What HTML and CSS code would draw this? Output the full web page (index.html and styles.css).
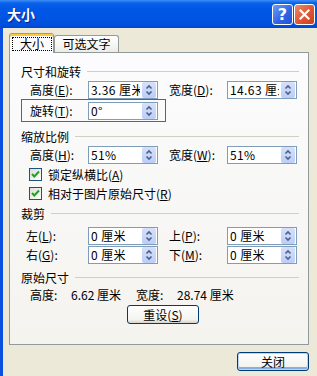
FILE: index.html
```html
<!DOCTYPE html>
<html lang="zh-CN">
<head>
    <meta charset="UTF-8">
    <meta name="viewport" content="width=device-width, initial-scale=1.0">
    <title>大小</title>
    <link rel="stylesheet" href="styles.css">
</head>
<body>
    <div class="window">
        <div class="titlebar">
            <span class="title">大小</span>
            <div class="caption-buttons">
                <span class="cap-btn help">?</span>
                <span class="cap-btn close">
                    <svg width="13" height="13" viewBox="0 0 13 13"><path d="M2.5 2.5 L10.5 10.5 M10.5 2.5 L2.5 10.5" stroke="#fff" stroke-width="2.2" stroke-linecap="square"/></svg>
                </span>
            </div>
        </div>

        <div class="client">
            <div class="tabs">
                <div class="tab active"><span class="focus">大小</span></div>
                <div class="tab">可选文字</div>
            </div>

            <div class="panel">
                <!-- Size and rotate -->
                <div class="group-title"><span>尺寸和旋转</span></div>
                <div class="row">
                    <span class="lbl">高度(<u>E</u>):</span>
                    <div class="spin"><span class="val">3.36 厘米</span><span class="spin-btn"></span></div>
                    <span class="lbl lbl-right">宽度(<u>D</u>):</span>
                    <div class="spin"><span class="val">14.63 厘米</span><span class="spin-btn"></span></div>
                </div>
                <div class="highlight">
                    <div class="row">
                        <span class="lbl">旋转(<u>T</u>):</span>
                        <div class="spin"><span class="val">0°</span><span class="spin-btn"></span></div>
                    </div>
                </div>

                <!-- Scale -->
                <div class="group-title group-scale"><span>缩放比例</span></div>
                <div class="row">
                    <span class="lbl">高度(<u>H</u>):</span>
                    <div class="spin"><span class="val">51%</span><span class="spin-btn"></span></div>
                    <span class="lbl lbl-right">宽度(<u>W</u>):</span>
                    <div class="spin"><span class="val">51%</span><span class="spin-btn"></span></div>
                </div>
                <div class="check-row">
                    <span class="checkbox"><svg width="11" height="11" viewBox="0 0 11 11"><polyline points="2,5 4.3,7.5 9,2.5" fill="none" stroke="#21a121" stroke-width="2"/></svg></span>
                    <span>锁定纵横比(<u>A</u>)</span>
                </div>
                <div class="check-row">
                    <span class="checkbox"><svg width="11" height="11" viewBox="0 0 11 11"><polyline points="2,5 4.3,7.5 9,2.5" fill="none" stroke="#21a121" stroke-width="2"/></svg></span>
                    <span>相对于图片原始尺寸(<u>R</u>)</span>
                </div>

                <!-- Crop -->
                <div class="group-title group-crop"><span>裁剪</span></div>
                <div class="row row-crop">
                    <span class="lbl lbl-short">左(<u>L</u>):</span>
                    <div class="spin"><span class="val">0 厘米</span><span class="spin-btn"></span></div>
                    <span class="lbl lbl-right">上(<u>P</u>):</span>
                    <div class="spin"><span class="val">0 厘米</span><span class="spin-btn"></span></div>
                </div>
                <div class="row row-crop">
                    <span class="lbl lbl-short">右(<u>G</u>):</span>
                    <div class="spin"><span class="val">0 厘米</span><span class="spin-btn"></span></div>
                    <span class="lbl lbl-right">下(<u>M</u>):</span>
                    <div class="spin"><span class="val">0 厘米</span><span class="spin-btn"></span></div>
                </div>

                <!-- Original size -->
                <div class="group-title group-orig"><span>原始尺寸</span></div>
                <div class="info">
                    <span class="info-key">高度:</span>
                    <span class="info-val">6.62 厘米</span>
                    <span class="info-key">宽度:</span>
                    <span class="info-val">28.74 厘米</span>
                </div>
                <button class="btn btn-reset">重设(<u>S</u>)</button>
            </div>

            <div class="footer">
                <button class="btn btn-default">关闭</button>
            </div>
        </div>
    </div>
</body>
</html>
```

FILE: styles.css
```css
/* Global */
body {
    margin: 0;
    background: #ece9d8;
    font-family: "Noto Sans CJK SC", "Liberation Sans", sans-serif;
    font-size: 12px;
    color: #000;
}

u {
    text-decoration: underline;
    text-underline-offset: 1px;
}

.window {
    width: 317px;
    height: 376px;
    overflow: hidden;
    background: #ece9d8;
}

/* Title bar */
.titlebar {
    height: 28px;
    display: flex;
    align-items: center;
    justify-content: space-between;
    padding: 0 2px 0 7px;
    background: linear-gradient(to bottom, #3d8ef7 0, #0a62ea 3px, #0058e6 8px, #0055e3 18px, #0050dc 24px, #0047d2 28px);
}

.title {
    color: #fff;
    font-weight: bold;
    font-size: 14px;
    text-shadow: 1px 1px 0 #0a1e8a;
}

.caption-buttons {
    display: flex;
    gap: 1px;
}

.cap-btn {
    width: 19px;
    height: 19px;
    border: 1px solid #fff;
    border-radius: 3px;
    display: flex;
    align-items: center;
    justify-content: center;
    color: #fff;
    font-family: "DejaVu Sans", sans-serif;
    font-weight: bold;
    font-size: 16px;
}

.help {
    background: linear-gradient(135deg, #6d9cf8 0%, #2f62e0 60%, #2251d4 100%);
}

.close {
    background: linear-gradient(135deg, #ec8c6c 0%, #dd5532 55%, #c9401c 100%);
}

/* Client area */
.client {
    border-left: 3px solid #0b4fe0;
    height: 348px;
    padding: 5px 0 0 6px;
}

/* Tabs */
.tabs {
    display: flex;
    align-items: flex-end;
    height: 20px;
    margin-bottom: -1px;
}

.tab {
    box-sizing: border-box;
    height: 17px;
    width: 65px;
    margin-bottom: 1px;
    border: 1px solid #919b9c;
    border-bottom: none;
    border-radius: 3px 3px 0 0;
    background: linear-gradient(to bottom, #ffffff, #f3f3ef 70%, #ecebe5);
    text-align: center;
    line-height: 16px;
}

.tab.active {
    position: relative;
    z-index: 1;
    width: 45px;
    height: 20px;
    margin-bottom: 0;
    padding: 3px 1px 0 2px;
    border-top: 1px solid #e68b2c;
    background: #fcfcfe;
    box-shadow: inset 0 2px 0 #ffc73c;
}

.focus {
    display: block;
    box-sizing: border-box;
    width: 40px;
    height: 14px;
    border: 1px dotted #000;
    line-height: 12px;
}

/* Tab panel */
.panel {
    box-sizing: border-box;
    width: 300px;
    height: 293px;
    border: 1px solid #919b9c;
    background: linear-gradient(to bottom, #fcfcfe, #f4f3ee);
    padding: 10px 9px 0 11px;
}

.group-title {
    display: flex;
    align-items: center;
    height: 17px;
    line-height: 17px;
}

.group-title::after {
    content: "";
    flex: 1;
    height: 1px;
    margin-left: 6px;
    background: #d0d0bf;
}

.group-scale {
    margin-top: 6px;
}

.group-crop {
    margin-top: 2px;
}

.group-orig {
    margin-top: 5px;
}

/* Rows with spin edits */
.row {
    display: flex;
    align-items: center;
    height: 20px;
}

/* red annotation frame around the rotate row */
.highlight {
    box-sizing: border-box;
    width: 145px;
    height: 23px;
    margin-top: -1px;
    padding: 1px 0 0 8px;
    border: 1px solid #ff2020;
    background: transparent;
}

.row-crop {
    align-items: flex-start;
    height: 19px;
    padding-top: 1px;
    box-sizing: border-box;
}

.group-crop + .row-crop {
    margin-top: 4px;
}

.lbl {
    width: 58px;
    padding-left: 9px;
    line-height: 18px;
    white-space: nowrap;
}

.highlight .lbl {
    padding-left: 0;
}

.lbl-short {
    width: 62px;
    padding-left: 5px;
}

.lbl-right {
    width: 58px;
    padding-left: 11px;
}

.spin {
    box-sizing: border-box;
    width: 70px;
    height: 18px;
    display: flex;
    align-items: stretch;
    border: 1px solid #7f9db9;
    background: #fff;
}

.val {
    flex: 1;
    overflow: hidden;
    white-space: nowrap;
    padding-left: 2px;
    margin-right: 2px;
    line-height: 16px;
    letter-spacing: 0.4px;
}

.spin-btn {
    width: 14px;
    margin: 0 1px 0 0;
    border-radius: 2px;
    background:
        url("data:image/svg+xml,%3Csvg xmlns='http://www.w3.org/2000/svg' width='14' height='16'%3E%3Cpath d='M4.5 6.5 L7 4 L9.5 6.5 M4.5 9.5 L7 12 L9.5 9.5' fill='none' stroke='%234d6185' stroke-width='1.6'/%3E%3C/svg%3E") center no-repeat,
        linear-gradient(to bottom, #d5e0fb, #bccdf7);
}

/* Checkboxes */
.check-row {
    display: flex;
    align-items: center;
    height: 19px;
    padding-left: 8px;
}

.checkbox {
    box-sizing: border-box;
    width: 13px;
    height: 13px;
    border: 1px solid #1c5180;
    background: linear-gradient(135deg, #dcdcd7, #ffffff);
    display: flex;
    align-items: center;
    justify-content: center;
    margin-right: 6px;
}

/* Original size */
.info {
    display: flex;
    height: 16px;
    line-height: 16px;
    margin-top: 1px;
    padding-left: 9px;
    white-space: nowrap;
}

.info-key {
    width: 41px;
}

.info-val {
    width: 65px;
}

/* Buttons */
.btn {
    box-sizing: border-box;
    width: 72px;
    height: 19px;
    padding: 0;
    border: 1px solid #003c74;
    border-radius: 3px;
    background: linear-gradient(to bottom, #ffffff, #f3f3ef 80%, #d8d2c6);
    font-family: inherit;
    font-size: 12px;
    line-height: 16px;
    color: #000;
}

.btn-reset {
    display: block;
    margin: 2px 0 0 106px;
}

.footer {
    margin-top: 7px;
    padding-left: 228px;
}

.btn-default {
    box-shadow: inset 0 0 0 1px #bcd4f6, inset 0 -2px 0 1px #89ade4;
}
```
